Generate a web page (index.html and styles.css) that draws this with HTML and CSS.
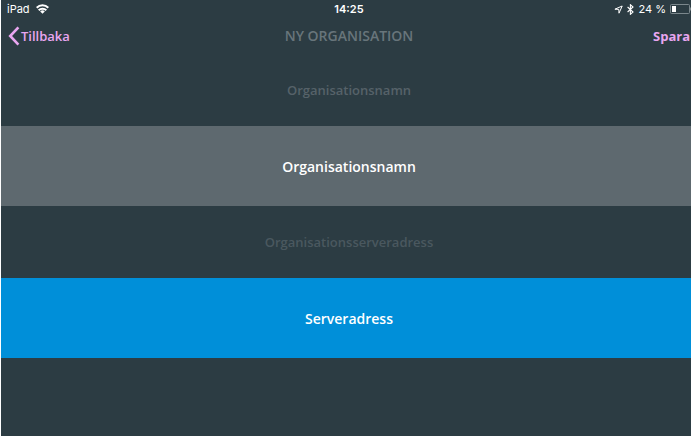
FILE: index.html
```
<!DOCTYPE html>
<html lang="sv">
<head>
<meta charset="utf-8">
<title>Ny organisation</title>
<link rel="stylesheet" href="styles.css">
</head>

<body>
<div class="status">
	<div class="left">
		<span>iPad</span>
		<svg class="wifi" width="13" height="10" viewBox="0 0 13 10" fill="none" stroke="#fff" stroke-width="2">
			<path d="M.7 3.7a8.2 8.2 0 0 1 11.6 0M2.7 6.2a5.4 5.4 0 0 1 7.6 0"/>
			<path d="M6.5 9.8L4.2 7.5a3.2 3.2 0 0 1 4.6 0z" fill="#fff" stroke="none"/>
		</svg>
	</div>
	<div class="clock">14:25</div>
	<div class="right">
		<svg width="9" height="9" viewBox="0 0 9 9" fill="none" stroke="#fff" stroke-width="1"><path d="M.9 4.2L8.2 1 5 8.2 4.8 4.4z"/></svg>
		<svg width="7" height="11" viewBox="0 0 7 11" fill="none" stroke="#fff" stroke-width="1.1"><path d="M.6 3l5.4 5L3.4 10.3V.7L6 3 .6 8"/></svg>
		<span>24 %</span>
		<svg width="21" height="10" viewBox="0 0 21 10"><rect x=".5" y=".5" width="19" height="9" rx="1" fill="none" stroke="#7b878c"/><rect x="2" y="2" width="4" height="6" fill="#fff"/><path d="M20.5 3.5v3" stroke="#7b878c"/></svg>
	</div>
</div>

<div class="nav">
	<button type="button" class="back">
		<svg width="12" height="20" viewBox="0 0 12 20" fill="none" stroke="#e9a6f0" stroke-width="2.6"><path d="M10.4 1.4L2.2 10l8.2 8.6"/></svg>
		Tillbaka
	</button>
	<h1>NY ORGANISATION</h1>
	<button type="button" class="save">Spara</button>
</div>

<form class="form">
	<label for="name">Organisationsnamn</label>
	<input type="text" id="name" class="field grey" placeholder="Organisationsnamn">
	<label for="server" class="dim">Organisationsserveradress</label>
	<input type="text" id="server" class="field blue" placeholder="Serveradress">
</form>
</body>
</html>
```

FILE: styles.css
```
*{margin:0; padding:0; box-sizing:border-box;}
html{background:#2c3c43;}
body{min-height:100vh; border-left:1px solid #fff; font-family:"Open Sans", sans-serif; overflow-x:hidden;}
svg{display:block; flex:none;}

.status{display:grid; grid-template-columns:1fr auto 1fr; align-items:center; height:18px; padding:0 0 0 6px; color:#fff; font:11px/18px Inter, sans-serif;}
.left, .right{display:flex; align-items:center; gap:6px;}
.right{justify-content:flex-end; gap:4px;}
.clock{font-weight:600;}

.nav{display:grid; grid-template-columns:1fr auto 1fr; align-items:center; height:36px; padding:0 1px 0 7px;}
.nav h1{color:#68757b; font-size:14px; line-height:20px; font-weight:600;}
.nav button{background:none; border:0; color:#e9a6f0; font-family:inherit; font-size:13px; line-height:20px; font-weight:600; cursor:pointer;}
.back{display:flex; align-items:center; gap:1px; justify-self:start;}
.nav .save{justify-self:end; font-weight:700;}

.form label{display:block; padding-left:6px; color:#566269; font-size:13px; line-height:72px; font-weight:600; text-align:center;}
.form .dim{color:#4a585f;}
.field{display:block; width:100%; height:80px; padding-left:6px; border:0; border-radius:0; outline:0; color:#fff; font-family:inherit; font-size:14px; font-weight:600; text-align:center;}
.field::placeholder{color:#fff; opacity:1;}
.grey{background:#5e696f;}
.blue{background:#008fd9;}
```
